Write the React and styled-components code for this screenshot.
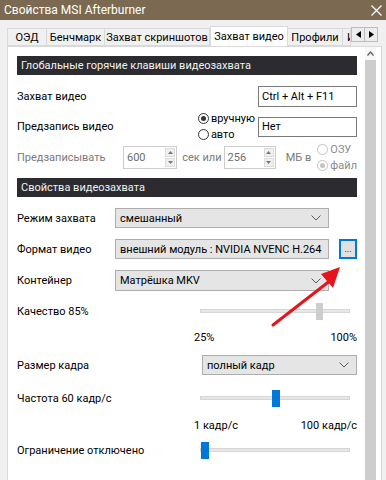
import React from 'react';
import styled, {createGlobalStyle} from 'styled-components';

const GlobalStyle = createGlobalStyle`
  html, body {
    margin: 0;
    padding: 0;
    background: #f0f0f0;
  }
  body {
    font-family: Roboto, "Liberation Sans", sans-serif;
    font-size: 11px;
    color: #000;
  }
`;

const Window = styled.div`
  width: 386px;
  height: 480px;
  background: #f0f0f0;
  overflow: hidden;
  position: relative;
  display: flex;
  flex-direction: column;
`;

const TitleBar = styled.div`
  height: 20px;
  background: #7b6a51;
  color: #fff;
  display: flex;
  align-items: center;
  justify-content: space-between;
  padding: 0 4px 0 4px;
  font-size: 12px;
`;

const TabBar = styled.div`
  margin-top: 5px;
  height: 21px;
  display: flex;
  align-items: flex-end;
  padding-left: 7px;
`;

const TabStrip = styled.div`
  flex: none;
  width: 344px;
  height: 21px;
  display: flex;
  align-items: flex-end;
  overflow: hidden;
  position: relative;
  z-index: 2;
`;

const Tab = styled.div`
  flex: none;
  width: ${p => p.w}px;
  height: ${p => (p.active ? 21 : 18)}px;
  margin-bottom: ${p => (p.active ? -1 : 0)}px;
  box-sizing: border-box;
  border: 1px solid #d9d9d9;
  border-bottom: ${p => (p.active ? 'none' : '1px solid #d9d9d9')};
  border-left: ${p => (p.first || p.active ? '1px solid #d9d9d9' : 'none')};
  background: ${p => (p.active ? '#fff' : '#f0f0f0')};
  display: flex;
  align-items: ${p => (p.active ? 'flex-start' : 'center')};
  padding-top: ${p => (p.active ? 3 : 0)}px;
  justify-content: ${p => (p.clip ? 'flex-start' : 'center')};
  padding-left: ${p => (p.clip ? 4 : 0)}px;
  white-space: nowrap;
  overflow: hidden;
`;

const TabArrows = styled.div`
  flex: none;
  display: flex;
  align-self: flex-start;
  margin-top: 2px;
`;

const ArrowBtn = styled.div`
  flex: none;
  width: 12px;
  height: 13px;
  border: 1px solid #bdbdbd;
  background: #ececec;
  display: flex;
  align-items: center;
  justify-content: center;
  margin-right: -1px;
`;

const Panel = styled.div`
  margin-left: 7px;
  width: 375px;
  flex: 1;
  box-sizing: border-box;
  border: 1px solid #d9d9d9;
  border-bottom: none;
  background: #fff;
  display: flex;
  position: relative;
  z-index: 1;
`;

const Content = styled.div`
  width: 357px;
  box-sizing: border-box;
  padding: 9px 8px 0 9px;
  display: flex;
  flex-direction: column;
`;

const ScrollBar = styled.div`
  width: 11px;
  display: flex;
  flex-direction: column;
`;

const ScrollUp = styled.div`
  height: 13px;
  background: #f7f7f7;
  display: flex;
  align-items: center;
  justify-content: center;
`;

const ScrollThumb = styled.div`
  flex: 1;
  background: #cdcdcd;
`;

const SectionHeader = styled.div`
  height: 19px;
  background: #2b2b30;
  color: #f2f2f2;
  display: flex;
  align-items: center;
  padding-left: 4px;
  margin-top: ${p => p.mt || 0}px;
`;

const Row = styled.div`
  display: flex;
  align-items: center;
  height: ${p => p.h}px;
  margin-top: ${p => p.mt}px;
  padding-left: ${p => p.pl || 0}px;
  justify-content: ${p => p.spread ? 'space-between' : 'flex-start'};
`;

const Label = styled.div`
  flex: ${p => (p.w ? 'none' : 1)};
  width: ${p => (p.w ? p.w + 'px' : 'auto')};
  color: ${p => (p.disabled ? '#7a7a7a' : '#000')};
  white-space: nowrap;
`;

const TextBox = styled.div`
  width: ${p => p.w}px;
  height: ${p => p.h}px;
  box-sizing: border-box;
  border: 1px solid #7a7a7a;
  background: #fff;
  display: flex;
  align-items: center;
  padding-left: 3px;
`;

const RadioGroup = styled.div`
  display: flex;
  flex-direction: column;
  gap: ${p => p.gap || 2}px;
  margin: ${p => p.m || '0'};
`;

const RadioItem = styled.div`
  display: flex;
  align-items: center;
  gap: 2px;
  color: ${p => (p.disabled ? '#8a8a8a' : '#000')};
  height: 14px;
`;

const RadioCircle = styled.div`
  width: 11px;
  height: 11px;
  box-sizing: border-box;
  border-radius: 50%;
  border: 1px solid ${p => (p.disabled ? '#c4c4c4' : '#333')};
  background: #fff;
  display: flex;
  align-items: center;
  justify-content: center;
  &::after {
    content: '';
    display: ${p => (p.checked ? 'block' : 'none')};
    width: 5px;
    height: 5px;
    border-radius: 50%;
    background: ${p => (p.disabled ? '#c4c4c4' : '#333')};
  }
`;

const Spin = styled.div`
  width: ${p => p.w}px;
  height: 23px;
  margin-left: ${p => p.ml || 0}px;
  box-sizing: border-box;
  border: 1px solid #cccccc;
  background: #fff;
  display: flex;
  align-items: center;
  justify-content: space-between;
  padding-left: 3px;
  color: #6d6d6d;
`;

const SpinButtons = styled.div`
  width: 12px;
  height: 100%;
  display: flex;
  flex-direction: column;
  justify-content: center;
  gap: 1px;
  padding: 1px;
  box-sizing: border-box;
`;

const SpinBtn = styled.div`
  flex: 1;
  background: #f0f0f0;
  border: 1px solid #dcdcdc;
  display: flex;
  align-items: center;
  justify-content: center;
`;

const MutedText = styled.span`
  color: #7a7a7a;
  margin-left: ${p => p.ml || 0}px;
  white-space: nowrap;
`;

const Select = styled.div`
  width: ${p => p.w}px;
  height: ${p => p.h || 20}px;
  box-sizing: border-box;
  border: 1px solid #adadad;
  background: #e5e5e5;
  display: flex;
  align-items: center;
  justify-content: space-between;
  padding: 0 7px 0 4px;
  white-space: nowrap;
`;

const DotsButton = styled.div`
  width: 19px;
  height: 20px;
  box-sizing: border-box;
  margin-left: 10px;
  border: 2px solid #0078d7;
  background: #e1e1e1;
  display: flex;
  align-items: flex-end;
  justify-content: center;
  padding-bottom: 3px;
  font-size: 9px;
  line-height: 1;
`;

const Track = styled.div`
  width: 150px;
  height: 4px;
  box-sizing: border-box;
  border: 1px solid #d6d6d6;
  background: #e7e7e7;
  position: relative;
`;

const Thumb = styled.div`
  position: absolute;
  top: -7px;
  width: ${p => (p.blue ? 8 : 7)}px;
  height: 17px;
  background: ${p => (p.blue ? '#0078d7' : '#cdcdcd')};
`;

const ScaleLabel = styled.span`
  white-space: nowrap;
`;

const ArrowOverlay = styled.svg`
  position: absolute;
  left: 0;
  top: 0;
  pointer-events: none;
  z-index: 5;
`;

const Chevron = () => (
  <svg width="10" height="6" viewBox="0 0 10 6">
    <path d="M0.5 0.5 L5 5 L9.5 0.5" fill="none" stroke="#5a5a5a" strokeWidth="1"/>
  </svg>
);

const Tri = ({dir}) => (
  <svg width="5" height="7" viewBox="0 0 5 7">
    {dir === 'left'
      ? <path d="M5 0 L0 3.5 L5 7 Z" fill="#000"/>
      : <path d="M0 0 L5 3.5 L0 7 Z" fill="#000"/>}
  </svg>
);

const SmallTri = ({up}) => (
  <svg width="5" height="3" viewBox="0 0 5 3">
    {up ? <path d="M0 3 L2.5 0 L5 3 Z" fill="#777"/> : <path d="M0 0 L2.5 3 L5 0 Z" fill="#777"/>}
  </svg>
);

const Radio = ({checked, disabled, children}) => (
  <RadioItem disabled={disabled}>
    <RadioCircle checked={checked} disabled={disabled}/>
    {children}
  </RadioItem>
);

const SpinBox = ({w, ml, value}) => (
  <Spin w={w} ml={ml}>
    {value}
    <SpinButtons>
      <SpinBtn><SmallTri up/></SpinBtn>
      <SpinBtn><SmallTri/></SpinBtn>
    </SpinButtons>
  </Spin>
);

const Slider = ({pos, blue}) => (
  <Track>
    <Thumb blue={blue} style={{left: pos}}/>
  </Track>
);

const tabs = [
  {label: 'ОЭД', w: 40},
  {label: 'Бенчмарк', w: 58},
  {label: 'Захват скриншотов', w: 105},
  {label: 'Захват видео', w: 78, active: true},
  {label: 'Профили', w: 55},
  {label: 'Интерфейс', w: 8, clip: true}
];

export default function App() {
  return (
    <Window>
      <GlobalStyle/>
      <TitleBar>
        <span>Свойства MSI Afterburner</span>
        <svg width="11" height="11" viewBox="0 0 11 11">
          <path d="M0.5 0.5 L10.5 10.5 M10.5 0.5 L0.5 10.5" stroke="#fff" strokeWidth="1.2"/>
        </svg>
      </TitleBar>

      <TabBar>
        <TabStrip>
          {tabs.map((t, i) => (
            <Tab key={t.label} w={t.w} active={t.active} clip={t.clip} first={i === 0}>{t.label}</Tab>
          ))}
        </TabStrip>
        <TabArrows>
          <ArrowBtn><Tri dir="left"/></ArrowBtn>
          <ArrowBtn><Tri dir="right"/></ArrowBtn>
        </TabArrows>
      </TabBar>

      <Panel>
        <Content>
          <SectionHeader>Глобальные горячие клавиши видеозахвата</SectionHeader>

          <Row h={21} mt={11}>
            <Label>Захват видео</Label>
            <TextBox w={99} h={21}>Ctrl + Alt + F11</TextBox>
          </Row>

          <Row h={31} mt={4}>
            <Label>Предзапись видео</Label>
            <RadioGroup gap={2} m="0 3px 0 0">
              <Radio checked>вручную</Radio>
              <Radio>авто</Radio>
            </RadioGroup>
            <TextBox w={99} h={20}>Нет</TextBox>
          </Row>

          <Row h={24} mt={3}>
            <Label w={106} disabled>Предзаписывать</Label>
            <SpinBox w={55} value="600"/>
            <MutedText ml={5}>сек или</MutedText>
            <SpinBox w={53} ml={2} value="256"/>
            <MutedText ml={10}>МБ в</MutedText>
            <RadioGroup gap={2} m="0 0 0 6px">
              <Radio disabled>ОЗУ</Radio>
              <Radio disabled checked>файл</Radio>
            </RadioGroup>
          </Row>

          <SectionHeader mt={9}>Свойства видеозахвата</SectionHeader>

          <Row h={20} mt={11}>
            <Label w={98}>Режим захвата</Label>
            <Select w={214}>смешанный<Chevron/></Select>
          </Row>

          <Row h={20} mt={11}>
            <Label w={98}>Формат видео</Label>
            <Select w={214}>внешний модуль : NVIDIA NVENC H.264<Chevron/></Select>
            <DotsButton>...</DotsButton>
          </Row>

          <Row h={21} mt={11}>
            <Label w={98}>Контейнер</Label>
            <Select w={214} h={21}>Матрёшка MKV<Chevron/></Select>
          </Row>

          <Row h={18} mt={11}>
            <Label w={183}>Качество 85%</Label>
            <Slider pos={115}/>
          </Row>

          <Row h={14} mt={10} pl={177} spread>
            <ScaleLabel>25%</ScaleLabel>
            <ScaleLabel>100%</ScaleLabel>
          </Row>

          <Row h={20} mt={11}>
            <Label w={185}>Размер кадра</Label>
            <Select w={155}>полный кадр<Chevron/></Select>
          </Row>

          <Row h={18} mt={14}>
            <Label w={183}>Частота 60 кадр/с</Label>
            <Slider pos={71} blue/>
          </Row>

          <Row h={14} mt={11} pl={177} spread>
            <ScaleLabel>1 кадр/с</ScaleLabel>
            <ScaleLabel>100 кадр/с</ScaleLabel>
          </Row>

          <Row h={18} mt={9}>
            <Label w={183}>Ограничение отключено</Label>
            <Slider pos={0} blue/>
          </Row>
        </Content>

        <ScrollBar>
          <ScrollUp>
            <svg width="7" height="5" viewBox="0 0 7 5">
              <path d="M0.5 4.5 L3.5 1 L6.5 4.5" fill="none" stroke="#606060" strokeWidth="1.3"/>
            </svg>
          </ScrollUp>
          <ScrollThumb/>
        </ScrollBar>
      </Panel>

      <ArrowOverlay width="386" height="480" viewBox="0 0 386 480">
        <line x1="273" y1="325" x2="331" y2="280" stroke="#e8141b" strokeWidth="3" strokeLinecap="round"/>
        <path d="M340 267 L321 274 L333 288 Z" fill="#e8141b"/>
      </ArrowOverlay>
    </Window>
  );
}
